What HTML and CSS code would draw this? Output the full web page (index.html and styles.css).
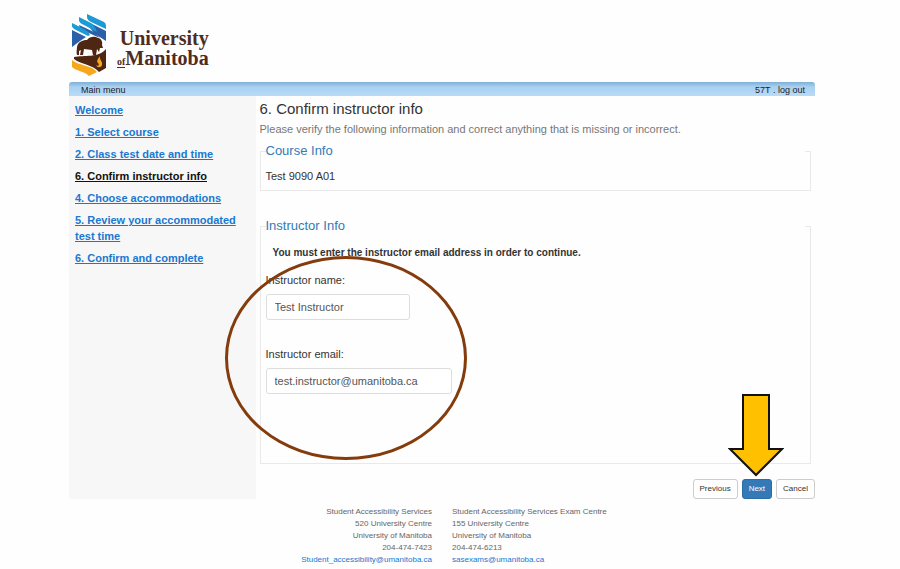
FILE: index.html
```html
<!DOCTYPE html>
<html lang="en">
<head>
<meta charset="utf-8">
<title>Confirm instructor info</title>
<link rel="stylesheet" href="styles.css">
</head>
<body>
<div class="page">
  <header class="brand">
    <svg class="crest" viewBox="0 0 35 62" aria-hidden="true">
      <path fill="#1c9ad6" d="M15 0 L32 8 Q34 9 34 12 V15 L19 8 Q15 6 15 3 Z"/>
      <path fill="#2b5fa8" d="M18 9 L34 17 V27 L23 20 L18 14 Z"/>
      <path fill="#1c9ad6" d="M7 3 L19 9 Q23 12 25 18 L12 11 Q7 9 7 6 Z"/>
      <path fill="#2b5fa8" d="M7 11 L22 18 L28 24 L19 20 L8 15 Z"/>
      <path fill="#1c9ad6" d="M0 9 L12 15 Q16 17 18 21 L16 22 L4 16 Q0 14 0 12 Z"/>
      <path fill="#2b5fa8" d="M0 16 L14 23 L8 27 L0 33 Z"/>
      <path fill="#4f2612" d="M5 41 C4 38 5 36 5 33 C6 28 10 26 15 26 C18 22 23 22 26 24 C29 24 31 28 30 31 L31 34 L28 34 L27 38 L25 35 L24 41 H21 L20 36 L12 35 L11 41 H8 L9 36 L7 37 L7 41 Z"/>
      <path fill="#4f2612" d="M2 43 C12 41 27 44 34 35 V54 L27 58 C22 51 8 50 2 45 Z"/>
      <path fill="#f5a81c" d="M0 46 C7 52 20 51 25 58 L17 62 C12 57 4 57 0 53 Z"/>
      <path fill="#f5a81c" d="M28 42 C27 46 31 47 30 51 C29 54 25 54 24 51 C26 53 28 51 26 49 C24 47 26 45 28 42 Z"/>
    </svg>
    <div class="wordmark">
      <span>University</span>
      <span><small>of</small>Manitoba</span>
    </div>
  </header>

  <nav class="topbar" aria-label="Main">
    <a href="#">Main menu</a>
    <span>57T . <a href="#">log out</a></span>
  </nav>

  <div class="columns">
    <nav class="steps" aria-label="Steps">
      <a href="#">Welcome</a>
      <a href="#">1. Select course</a>
      <a href="#">2. Class test date and time</a>
      <a href="#" class="current" aria-current="step">6. Confirm instructor info</a>
      <a href="#">4. Choose accommodations</a>
      <a href="#">5. Review your accommodated test time</a>
      <a href="#">6. Confirm and complete</a>
    </nav>

    <main>
      <form>
        <h1>6. Confirm instructor info</h1>
        <p class="intro">Please verify the following information and correct anything that is missing or incorrect.</p>
        <fieldset class="course">
          <legend>Course Info</legend>
          <p>Test 9090 A01</p>
        </fieldset>
        <fieldset class="instructor">
          <legend>Instructor Info</legend>
          <p class="notice">You must enter the instructor email address in order to continue.</p>
          <label for="name">Instructor name:</label>
          <input id="name" class="name" type="text" value="Test Instructor">
          <label for="email">Instructor email:</label>
          <input id="email" class="email" type="text" value="test.instructor@umanitoba.ca">
          <span class="ring"></span>
        </fieldset>
        <div class="actions">
          <button type="button">Previous</button>
          <button type="button" class="primary">Next</button>
          <button type="button">Cancel</button>
          <svg class="arrow" viewBox="0 0 56 84" aria-hidden="true"><path d="M15 2 H41 V56 H54 L28 82 L2 56 H15 Z" fill="#ffc000" stroke="#111" stroke-width="2"/></svg>
        </div>
      </form>
    </main>
  </div>

  <footer>
    <address class="left">Student Accessibility Services<br>520 University Centre<br>University of Manitoba<br>204-474-7423<br><a href="#">Student_accessibility@umanitoba.ca</a></address>
    <address>Student Accessibility Services Exam Centre<br>155 University Centre<br>University of Manitoba<br>204-474-6213<br><a href="#">sasexams@umanitoba.ca</a></address>
  </footer>
</div>
</body>
</html>
```
FILE: styles.css
```css
* { box-sizing: border-box; }

body {
  margin: 0;
  background: #fefefe;
  color: #333;
  font: 11px/16px "Liberation Sans", Arial, sans-serif;
}

a { color: #1a78d0; }
h1, p { margin: 0; }

.page { padding: 14px 85px 0 69px; }

.brand {
  display: flex;
  gap: 10px;
  padding: 0 3px;
  height: 68px;
}
.crest { width: 35px; height: 62px; }
.wordmark {
  display: flex;
  flex-direction: column;
  align-items: flex-end;
  padding-top: 14px;
  color: #4f2b20;
  font: bold 20px/20px "Liberation Serif", serif;
}
.wordmark small {
  border-bottom: 1px solid;
  font-size: 10px;
  line-height: 10px;
}

.topbar {
  display: flex;
  justify-content: space-between;
  padding: 2px 10px 0 12px;
  border-radius: 3px 3px 0 0;
  background: linear-gradient(#7fafd6, #a9d0f1 35%, #b9dbf8);
  color: #222;
  font-size: 9px;
  line-height: 12px;
}
.topbar a { color: inherit; text-decoration: none; }

.columns { display: flex; }
.steps {
  display: flex;
  flex: 0 0 25%;
  flex-direction: column;
  align-items: flex-start;
  gap: 6px;
  padding: 6px;
  background: #f7f7f7;
  font-weight: bold;
}
.steps .current { color: #111; }

main { flex: 1; padding-left: 4px; }
h1 {
  padding-top: 3px;
  font-size: 15px;
  font-weight: normal;
  line-height: 20px;
}
.intro {
  padding-top: 2px;
  color: #777;
}

fieldset {
  position: relative;
  min-width: 0;
  margin: 0 4px 0 0;
  padding: 0 5px;
  border: 1px solid #e9e9e9;
}
legend {
  width: 100%;
  padding: 0;
  color: #337ab7;
  font-size: 13px;
  line-height: 18px;
}
.course { padding-bottom: 6px; margin-top: 5px; }
.course p { padding-top: 8px; }
.instructor { margin-top: 26px; padding-bottom: 69px; }
.notice {
  padding: 10px 7px 11px;
  font-size: 10px;
  font-weight: bold;
}
label { display: block; }
input {
  display: block;
  height: 26px;
  margin: 6px 0 26px;
  padding: 0 8px;
  border: 1px solid #ddd;
  border-radius: 3px;
  background: #fff;
  color: #555;
  font: inherit;
}
.name { width: 144px; }
.email { width: 186px; margin-bottom: 0; }

.ring {
  position: absolute;
  top: 21px;
  left: -36px;
  width: 242px;
  height: 204px;
  border: 3px solid #843c0c;
  border-radius: 50%;
  pointer-events: none;
}

.actions {
  position: relative;
  display: flex;
  justify-content: flex-end;
  gap: 4px;
  padding-top: 15px;
}
button {
  height: 20px;
  padding: 0 6px;
  border: 1px solid #ccc;
  border-radius: 3px;
  background: #fff;
  color: #333;
  font: 8px/18px "Liberation Sans", Arial, sans-serif;
}
.primary {
  border-color: #2e6da4;
  background: #337ab7;
  color: #fff;
}
.arrow {
  position: absolute;
  right: 31px;
  bottom: 22px;
  width: 56px;
  height: 84px;
}

footer {
  display: grid;
  grid-template-columns: 363px 1fr;
  gap: 20px;
  padding-top: 7px;
  color: #666;
  font-size: 8px;
  line-height: 12px;
}
address { font-style: normal; }
.left { text-align: right; }
footer a { text-decoration: none; }
```
